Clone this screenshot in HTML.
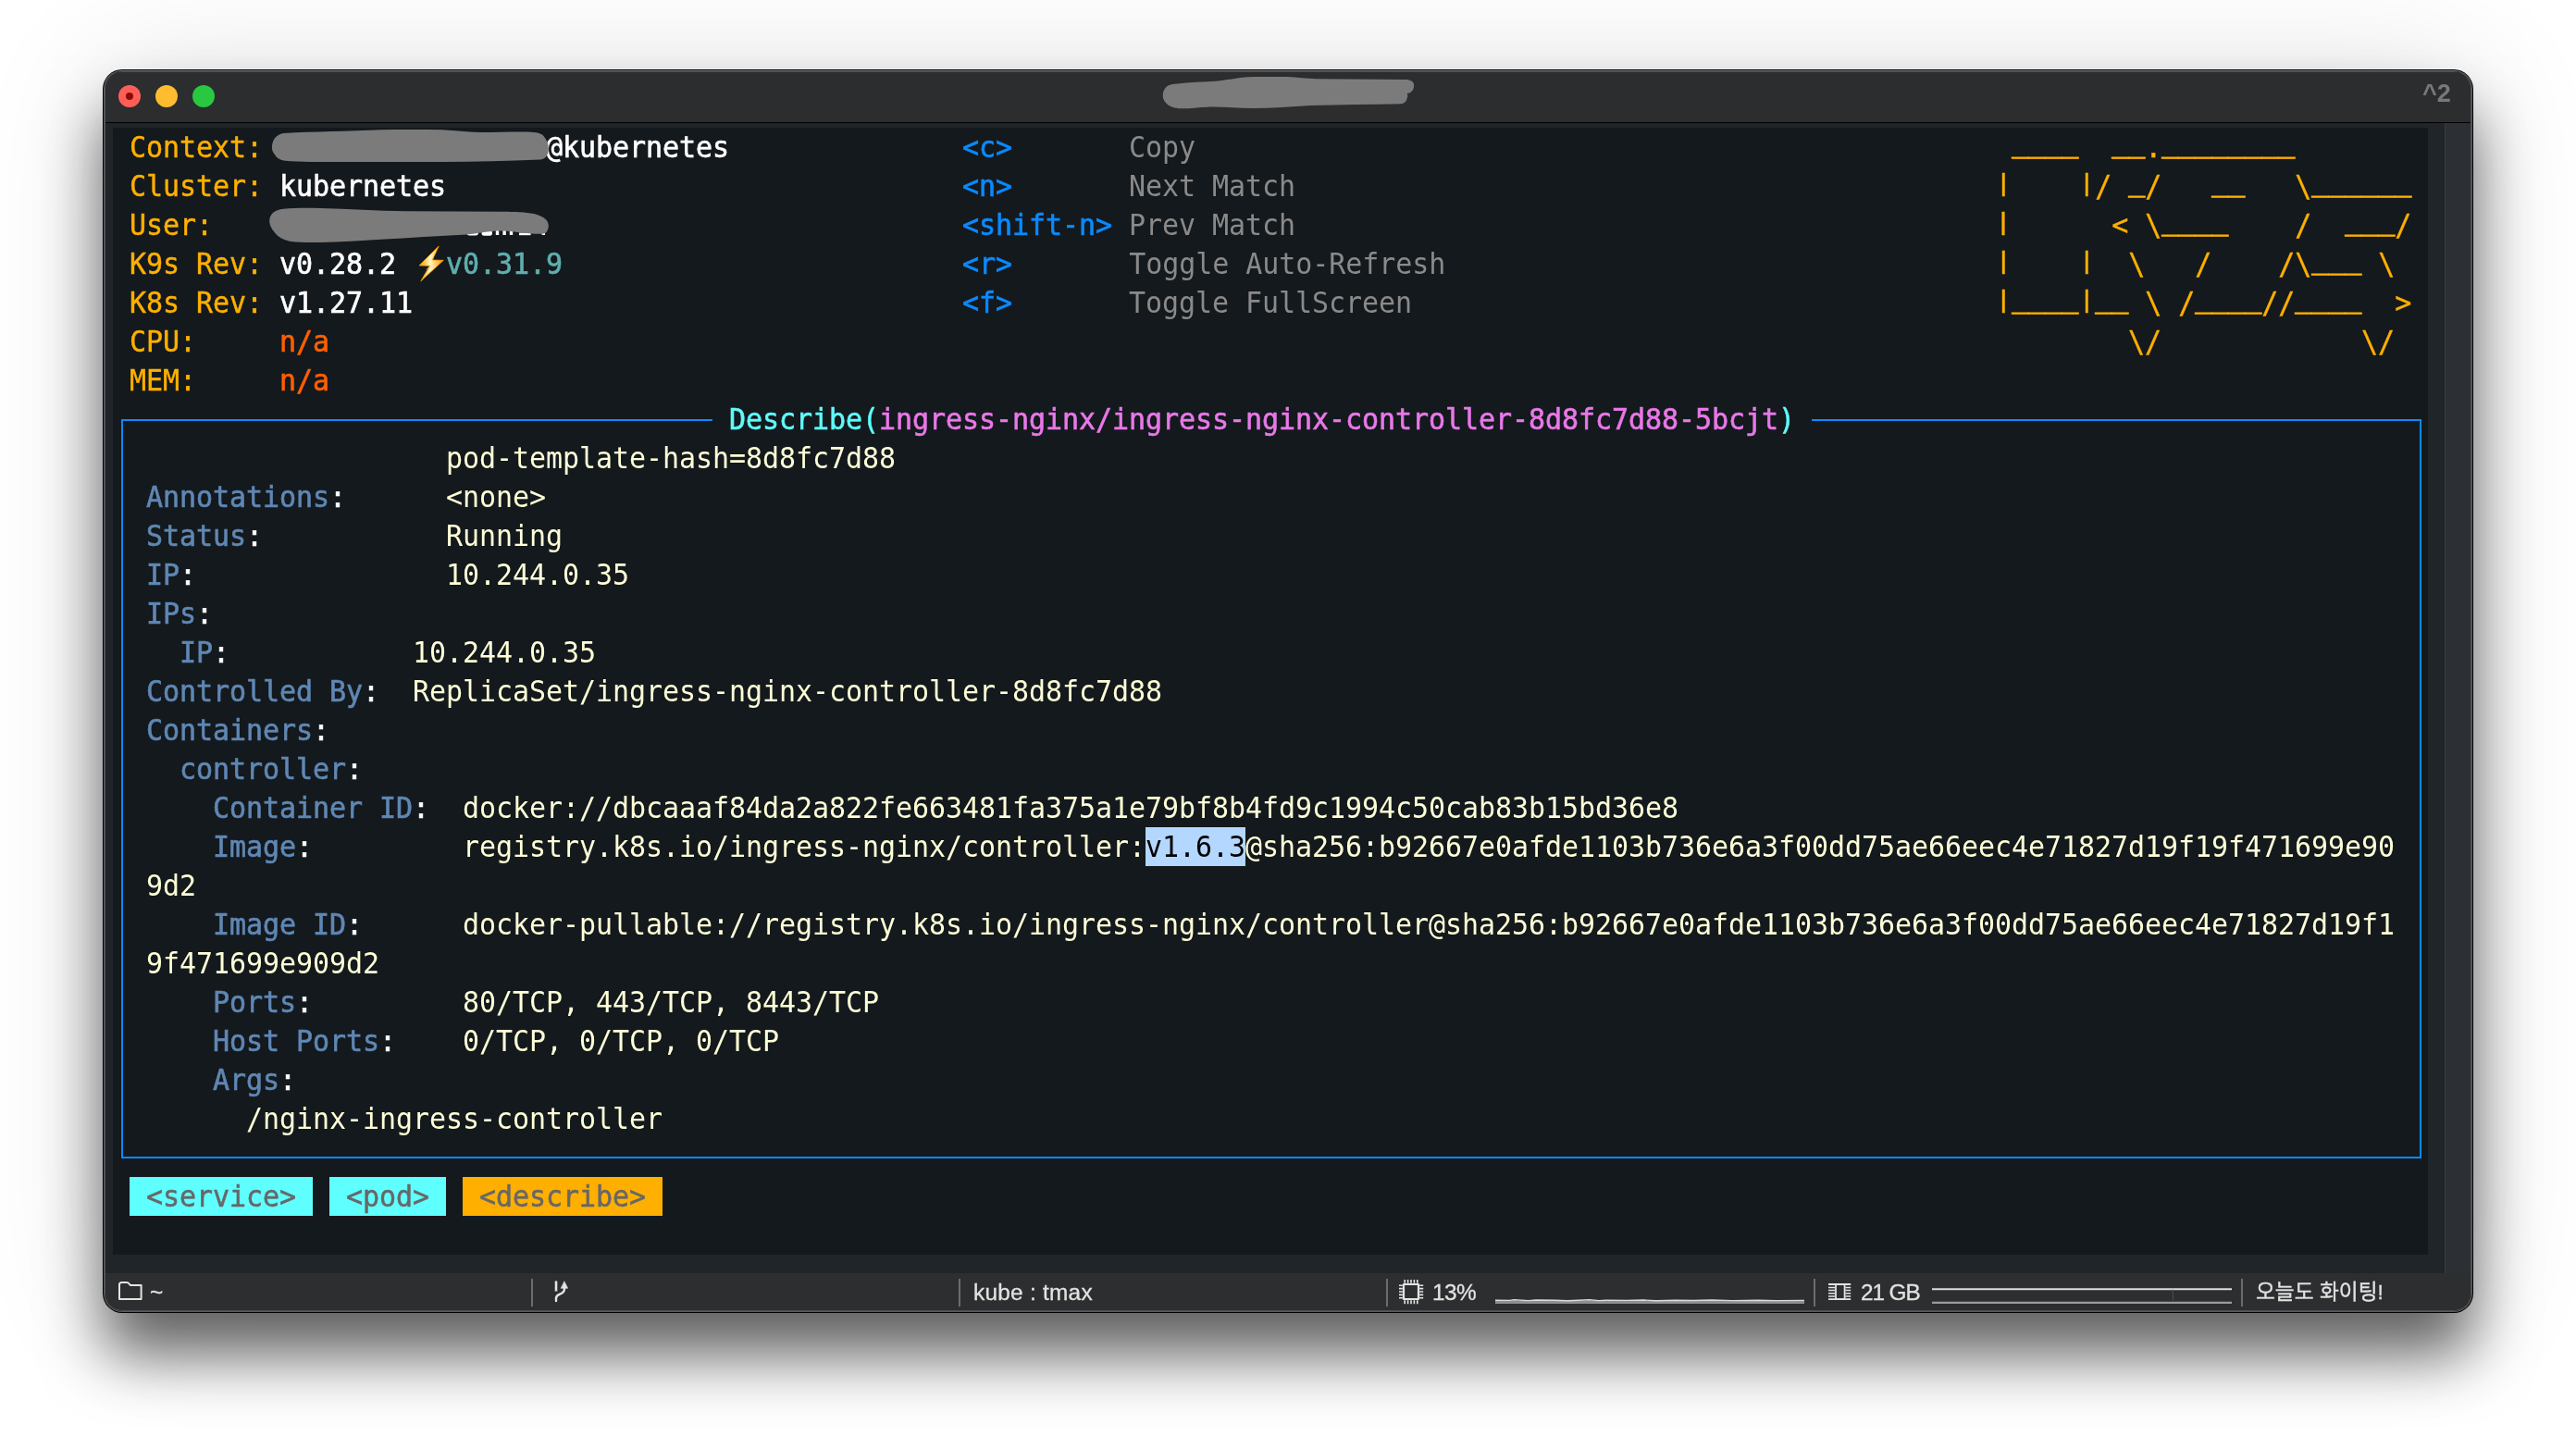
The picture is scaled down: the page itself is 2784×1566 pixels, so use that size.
<!DOCTYPE html>
<html lang="ko">
<head>
<meta charset="utf-8">
<title>k9s</title>
<style>
html,body{margin:0;padding:0;background:#fff;}
body{width:2784px;height:1566px;position:relative;overflow:hidden;font-family:"Liberation Sans","Noto Sans CJK KR",sans-serif;}
#shadow{position:absolute;left:112px;top:76px;width:2560px;height:1342px;border-radius:20px;
 box-shadow:0 46px 66px rgba(0,0,0,.6),0 0 140px rgba(0,0,0,.12);}
#win{position:absolute;left:111px;top:75px;width:2562px;height:1344px;border-radius:21px;background:#000;}
#hl{position:absolute;left:1px;top:1px;width:2560px;height:1342px;border-radius:20px;background:linear-gradient(#6e6f72 0,#56595d 40px);}
#clip{position:absolute;left:2px;top:2px;width:2558px;height:1340px;border-radius:19px;overflow:hidden;background:#20252a;}
#clip::after{content:'';position:absolute;left:0;top:0;right:0;bottom:0;border-radius:19px;box-shadow:inset 1px 0 0 #4c4f53,inset -1px 0 0 #4c4f53,inset 0 -1px 0 #4c4f53;pointer-events:none;z-index:5;}
#tb{position:absolute;left:0;top:0;width:2558px;height:55px;background:#2c2d2f;border-bottom:1px solid #000;box-shadow:inset 0 1px 0 #48494b;}
.tl{position:absolute;top:15px;width:24px;height:24px;border-radius:50%;}
#term{position:absolute;left:9px;top:61px;width:2502px;height:1218px;background:#14191d;overflow:hidden;
 font-family:"DejaVu Sans Mono","Liberation Mono",monospace;font-size:30px;letter-spacing:-0.0615px;line-height:42px;color:#fff;}
#txt{position:absolute;left:0;top:0;width:2502px;height:1218px;will-change:transform;}
.row{position:absolute;left:0;height:42px;white-space:pre;margin-top:1px;transform:scaleY(1.045);transform-origin:0 32px;}
.w,.b,.c,.p,.k,.r,.t{-webkit-text-stroke:0.6px currentColor}
.o{-webkit-text-stroke:0.4px currentColor}
.lgo{color:#ffb000;-webkit-text-stroke:0.4px currentColor}
.o{color:#ffb000}.w{color:#fff}.r{color:#ff5f00}.t{color:#5fafaf}.b{color:#0a8aff}.g{color:#8a8a8a}
.c{color:#5ffafa}.p{color:#e878e8}.k{color:#5f87b4}.v{color:#ffffd7}
.u{position:relative;top:-5.6px;-webkit-text-stroke:0.9px currentColor !important}
.vb{display:inline-block;transform:translateY(-3.4px) scaleY(0.8)}
.bolt{display:inline-block;width:36px;text-align:center;color:#ffa200;letter-spacing:0;font-size:21px;line-height:42px;vertical-align:top;position:relative;left:0.5px;top:-1.5px;font-size:19px}
.sel{color:#000;}
.cr{color:#676767;-webkit-text-stroke:0.5px currentColor}
.bx{position:absolute;background:#0a8aff;}
.bg{position:absolute;}
#sb{position:absolute;left:2529px;top:56px;width:29px;height:1243px;background:#2c2f34;border-left:1px solid #3a3d42;}
#st{position:absolute;left:0;top:1299px;width:2558px;height:41px;background:#2d2e30;font-size:25px;color:#e4e4e4;}
.sep{position:absolute;top:6px;width:2px;height:30px;background:#6c6c6e;}
.stx{position:absolute;top:0.4px;height:41px;line-height:41px;white-space:pre;will-change:transform;font-size:24.4px;letter-spacing:.25px;-webkit-text-stroke:0.3px currentColor;color:#e2e2e2;}
.ko{font-size:22.7px;letter-spacing:0;font-family:"Liberation Sans","Noto Sans CJK KR",sans-serif;}
svg{position:absolute;overflow:visible;}
#t2{position:absolute;right:22px;top:-3px;height:55px;line-height:55px;font-size:27px;font-weight:bold;color:#77787a;will-change:transform;}

</style>
</head>
<body>
<div id="shadow"></div>
<div id="win">
<div id="hl"></div>
<div id="clip">
<div id="tb">
<div class="tl" style="left:15px;background:#ff5f57"><div style="position:absolute;left:8px;top:8px;width:8px;height:8px;border-radius:50%;background:#8e0a04"></div></div>
<div class="tl" style="left:55px;background:#febc2e"></div>
<div class="tl" style="left:95px;background:#28c840"></div>
<svg style="left:0;top:0" width="2558" height="55" viewBox="113 77 2558 55"><path fill="#7b7b7b" d="M1256.7,103.5 C1257,96 1261,92 1267.3,91.1 C1285,88.5 1300,88.5 1317,87.4 C1330,86 1342,83 1354.2,83 L1391.5,83 C1402,83.3 1412,85 1422.5,85.2 L1520,85.9 C1526,86.5 1528.5,89 1528.1,93 C1528,97.5 1525,100.5 1520.7,101 C1521.5,103 1521.5,104.5 1520.7,106 C1520,109.5 1518,111.8 1514.5,112.2 C1481,113 1449,113 1416.3,114.1 C1395,115.5 1375,117 1354.2,117 C1337,117 1321,115.2 1304.5,115.7 C1294,116 1284,117.8 1273.5,117.2 C1268,116.5 1264,115 1261,112.2 C1258.5,109.8 1256.8,107 1256.7,103.5 Z"/></svg>
<div id="t2">^2</div>
</div>
<div id="sb"></div>
<div id="term">
<div class="bx" style="left:9px;top:315px;width:639px;height:2px"></div>
<div class="bx" style="left:1836px;top:315px;width:659px;height:2px"></div>
<div class="bx" style="left:9px;top:315px;width:2px;height:799px"></div>
<div class="bx" style="left:2493px;top:315px;width:2px;height:799px"></div>
<div class="bx" style="left:9px;top:1112px;width:2486px;height:2px"></div>
<div class="bg" style="left:1116px;top:756px;width:108px;height:42px;background:#b3d7ff"></div>
<div class="bg" style="left:18px;top:1134px;width:198px;height:42px;background:#5fffff"></div>
<div class="bg" style="left:234px;top:1134px;width:126px;height:42px;background:#5fffff"></div>
<div class="bg" style="left:378px;top:1134px;width:216px;height:42px;background:#ffaf00"></div>
<div id="txt">
<div class="row" style="top:0px"> <span class="o">Context:</span>                 <span class="w">@kubernetes</span>              <span class="b">&lt;c&gt;</span>       <span class="g">Copy</span>                                                <span class="lgo"> <span class="u">____</span>  <span class="u">__</span>.<span class="u">________</span></span></div>
<div class="row" style="top:42px"> <span class="o">Cluster:</span> <span class="w">kubernetes</span>                               <span class="b">&lt;n&gt;</span>       <span class="g">Next Match</span>                                          <span class="lgo"><span class="vb">|</span>    <span class="vb">|</span>/ <span class="u">_</span>/   <span class="u">__</span>   \<span class="u">______</span></span></div>
<div class="row" style="top:84px"> <span class="o">User:</span>                                             <span class="b">&lt;shift-n&gt;</span> <span class="g">Prev Match</span>                                          <span class="lgo"><span class="vb">|</span>      &lt; \<span class="u">____</span>    /  <span class="u">___</span>/</span></div>
<div class="row" style="top:126px"> <span class="o">K9s Rev:</span> <span class="w">v0.28.2</span> <span class="bolt">⚡</span><span class="t">v0.31.9</span>                        <span class="b">&lt;r&gt;</span>       <span class="g">Toggle Auto-Refresh</span>                                 <span class="lgo"><span class="vb">|</span>    <span class="vb">|</span>  \   /    /\<span class="u">___</span> \</span></div>
<div class="row" style="top:168px"> <span class="o">K8s Rev:</span> <span class="w">v1.27.11</span>                                 <span class="b">&lt;f&gt;</span>       <span class="g">Toggle FullScreen</span>                                   <span class="lgo"><span class="vb">|</span><span class="u">____</span><span class="vb">|</span><span class="u">__</span> \ /<span class="u">____</span>//<span class="u">____</span>  &gt;</span></div>
<div class="row" style="top:210px"> <span class="o">CPU:</span>     <span class="r">n/a</span>                                                                                                    <span class="lgo">        \/            \/</span></div>
<div class="row" style="top:252px"> <span class="o">MEM:</span>     <span class="r">n/a</span></div>
<div class="row" style="top:294px">                                     <span class="c">Describe(</span><span class="p">ingress-nginx/ingress-nginx-controller-8d8fc7d88-5bcjt</span><span class="c">)</span></div>
<div class="row" style="top:336px">                    <span class="v">pod-template-hash=8d8fc7d88</span></div>
<div class="row" style="top:378px">  <span class="k">Annotations</span><span class="w">:</span>      <span class="v">&lt;none&gt;</span></div>
<div class="row" style="top:420px">  <span class="k">Status</span><span class="w">:</span>           <span class="v">Running</span></div>
<div class="row" style="top:462px">  <span class="k">IP</span><span class="w">:</span>               <span class="v">10.244.0.35</span></div>
<div class="row" style="top:504px">  <span class="k">IPs</span><span class="w">:</span></div>
<div class="row" style="top:546px">    <span class="k">IP</span><span class="w">:</span>           <span class="v">10.244.0.35</span></div>
<div class="row" style="top:588px">  <span class="k">Controlled By</span><span class="w">:</span>  <span class="v">ReplicaSet/ingress-nginx-controller-8d8fc7d88</span></div>
<div class="row" style="top:630px">  <span class="k">Containers</span><span class="w">:</span></div>
<div class="row" style="top:672px">    <span class="k">controller</span><span class="w">:</span></div>
<div class="row" style="top:714px">      <span class="k">Container ID</span><span class="w">:</span>  <span class="v">docker://dbcaaaf84da2a822fe663481fa375a1e79bf8b4fd9c1994c50cab83b15bd36e8</span></div>
<div class="row" style="top:756px">      <span class="k">Image</span><span class="w">:</span>         <span class="v">registry.k8s.io/ingress-nginx/controller:</span><span class="sel">v1.6.3</span><span class="v">@sha256:b92667e0afde1103b736e6a3f00dd75ae66eec4e71827d19f19f471699e90</span></div>
<div class="row" style="top:798px">  <span class="v">9d2</span></div>
<div class="row" style="top:840px">      <span class="k">Image ID</span><span class="w">:</span>      <span class="v">docker-pullable://registry.k8s.io/ingress-nginx/controller@sha256:b92667e0afde1103b736e6a3f00dd75ae66eec4e71827d19f1</span></div>
<div class="row" style="top:882px">  <span class="v">9f471699e909d2</span></div>
<div class="row" style="top:924px">      <span class="k">Ports</span><span class="w">:</span>         <span class="v">80/TCP, 443/TCP, 8443/TCP</span></div>
<div class="row" style="top:966px">      <span class="k">Host Ports</span><span class="w">:</span>    <span class="v">0/TCP, 0/TCP, 0/TCP</span></div>
<div class="row" style="top:1008px">      <span class="k">Args</span><span class="w">:</span></div>
<div class="row" style="top:1050px">        <span class="v">/nginx-ingress-controller</span></div>
<div class="row" style="top:1134px">  <span class="cr">&lt;service&gt;</span>   <span class="cr">&lt;pod&gt;</span>   <span class="cr">&lt;describe&gt;</span></div>
</div>
<svg style="left:0;top:0" width="2502" height="1218" viewBox="122 138 2502 1218">
<path fill="#7b7b7b" d="M293.9,159.7 C294,151 298,145.5 306.4,143.9 C340,142 376,142.2 412,140.3 C434,139.8 456,139.8 478,140.3 C492,140.8 504,143 517.6,143 C535,143.2 553,142 570.4,142.5 C580,143 585.5,144 587.6,147.2 C591,151 592.8,155 592.8,160.4 C592.8,164 592,167 590,169.6 C588.5,171.5 586.5,172.3 583.6,172.5 C548,173.8 513,174.9 478,174.9 L346,174.9 C332,175 318,175 306.4,173.6 C301.5,172.5 298.5,170 297,167 C295,164.8 294,162.5 293.9,159.7 Z"/>
<rect fill="#ffffff" x="504.5" y="249" width="12.5" height="5.5" rx="2.4"/>
<rect fill="#ffffff" x="520.5" y="249" width="11.5" height="5.7" rx="2.6"/>
<rect fill="#ffffff" x="535.8" y="249" width="3.4" height="5" rx="0"/>
<rect fill="#ffffff" x="543.4" y="249" width="3.4" height="5" rx="0"/>
<rect fill="#ffffff" x="550.8" y="249" width="3.4" height="5" rx="0"/>
<rect fill="#ffffff" x="561" y="251.5" width="12.6" height="2.7" rx="0"/>
<rect fill="#ffffff" x="585.6" y="249" width="3.4" height="5" rx="0"/>
<path fill="#7b7b7b" d="M291.2,239.6 C291,231.5 296.5,226.8 306.4,225.7 C319,224.5 333,224.6 346,225 C377,225.8 407,228 438.4,228.3 L544,228.7 C556,228.8 568,229.2 577,231 C587,233.5 592.5,237.5 592.8,243.5 C592.9,246.5 592,249.5 590,251.4 C588.5,252.5 586.5,252.7 583.6,252.8 C573,252.9 566,251.8 556,250.6 C548,249.5 540,249.3 532,249.9 C522,250.8 513,252.6 504.4,253.4 C473,254.8 443,257 412,258.7 C390,260 368,261.5 346,262 C334,262.3 323,262 313,260.7 C306,259.2 300.5,256 297,251.4 C293.5,247.5 291.5,243.8 291.2,239.6 Z"/>
<defs><linearGradient id="lg" x1="0" y1="0" x2="1" y2="0"><stop offset="0" stop-color="#ff9500"/><stop offset="0.45" stop-color="#fff6c0"/><stop offset="1" stop-color="#ff9800"/></linearGradient></defs>
<path fill="url(#lg)" stroke="#ffa000" stroke-width="0.8" stroke-linejoin="round" d="M474.2,266 L453,286.9 L464.6,287.3 L454.8,303.8 L479.3,281.3 L467.2,281 Z"/>
</svg>
</div>
<div id="st">
<div class="sep" style="left:461px"></div>
<div class="sep" style="left:923px"></div>
<div class="sep" style="left:1385px"></div>
<div class="sep" style="left:1847px"></div>
<div class="sep" style="left:2309px"></div>
<svg style="left:0;top:0" width="2558" height="41" viewBox="113 1376 2558 41" fill="none" stroke="#e4e4e4" stroke-width="2" stroke-linejoin="round" stroke-linecap="round">
<path d="M129,1404 L129,1388.5 Q129,1386 131.5,1386 L137,1386 Q138.5,1386 139.5,1387.3 L141,1389 L152.6,1389 L152.6,1404 Z" stroke-linecap="butt"/>
<path d="M601,1384.5 L601,1395.5" stroke-width="2.6" stroke-linecap="butt"/>
<path d="M601,1406 L601,1403 C601,1397.5 610,1400 610,1393 L610,1391" stroke-width="2.4"/>
<path d="M610,1385 L613.6,1392.3 L606.4,1392.3 Z" fill="#e4e4e4" stroke-width="0.6"/>
<rect x="1517" y="1388" width="16" height="16" stroke-width="2.2"/>
<path d="M1518.2,1383 L1518.2,1386.8 M1518.2,1405.2 L1518.2,1409.2 M1512,1389.2 L1515.8,1389.2 M1534.2,1389.2 L1538.2,1389.2 M1521.6,1383 L1521.6,1386.8 M1521.6,1405.2 L1521.6,1409.2 M1512,1392.6 L1515.8,1392.6 M1534.2,1392.6 L1538.2,1392.6 M1525.0,1383 L1525.0,1386.8 M1525.0,1405.2 L1525.0,1409.2 M1512,1396.0 L1515.8,1396.0 M1534.2,1396.0 L1538.2,1396.0 M1528.4,1383 L1528.4,1386.8 M1528.4,1405.2 L1528.4,1409.2 M1512,1399.4 L1515.8,1399.4 M1534.2,1399.4 L1538.2,1399.4 M1531.8,1383 L1531.8,1386.8 M1531.8,1405.2 L1531.8,1409.2 M1512,1402.8 L1515.8,1402.8 M1534.2,1402.8 L1538.2,1402.8" stroke-width="1.6" stroke-linecap="butt"/>
<path d="M1616,1407.6 L1950,1407.6" stroke="#8f8f8f" stroke-width="3" stroke-linecap="butt"/>
<path d="M1616,1405.2 L1632,1405.4 L1636,1404.8 L1652,1405.6 L1660,1405 L1680,1405.2 L1694,1405.7 L1718,1404.8 L1728,1405.6 L1736,1405.2 L1758,1405.4 L1776,1405 L1790,1405.7 L1810,1405.2 L1830,1405.5 L1850,1405 L1872,1405.6 L1900,1405.2 L1920,1405.6 L1950,1405.4" stroke="#dcdcdc" stroke-width="1.4" stroke-linecap="butt"/>
<path d="M1976,1388 L2000.2,1388 M1976,1404.2 L2000.2,1404.2" stroke-width="1.8" stroke-linecap="butt"/>
<rect x="1984" y="1388" width="9.6" height="16.2" stroke-width="1.8"/>
<path d="M1976,1391.4 h7 M1976,1394.6 h7 M1976,1397.8 h7 M1976,1401 h7 M1994.4,1391.4 h5.8 M1994.4,1394.6 h5.8 M1994.4,1397.8 h5.8 M1994.4,1401 h5.8" stroke-width="1.5" stroke-linecap="butt"/>
<path d="M2088,1393.2 L2412,1393.2" stroke="#dcdcdc" stroke-width="2" stroke-linecap="butt"/>
<path d="M2088,1407.8 L2412,1407.8" stroke="#9a9a9a" stroke-width="2.2" stroke-linecap="butt"/>
<path d="M2348,1394 L2348.6,1405" stroke="#5a5a5a" stroke-width="0.8"/>
</svg>
<div class="stx" style="left:49px">~</div>
<div class="stx" style="left:939px">kube : tmax</div>
<div class="stx" style="left:1435.4px;letter-spacing:-.55px">13%</div>
<div class="stx" style="left:1897.6px;letter-spacing:-1.1px">21 GB</div>
<div class="stx ko" style="left:2325px">오늘도 화이팅!</div>
</div>
</div>
</div>
</body>
</html>
